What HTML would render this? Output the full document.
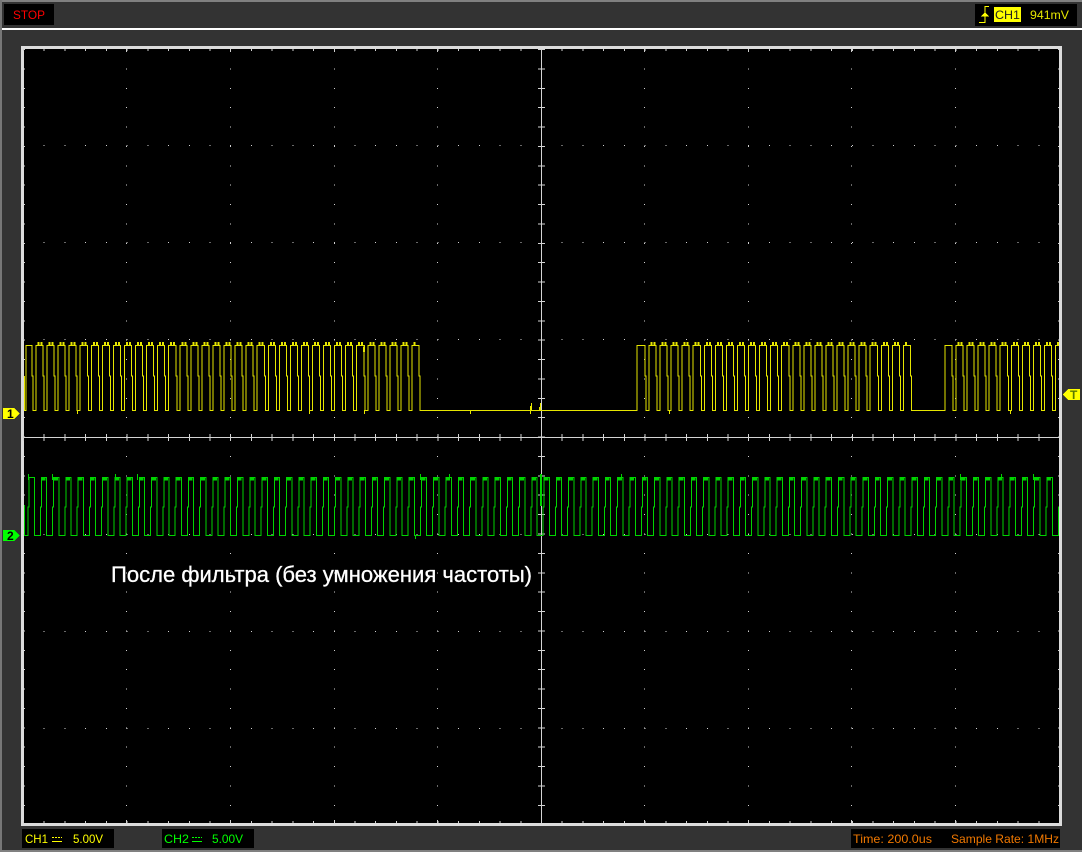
<!DOCTYPE html>
<html lang="ru">
<head>
<meta charset="utf-8">
<title>Oscilloscope</title>
<style>
html,body{margin:0;padding:0;background:#333;width:1082px;height:852px;overflow:hidden}
svg{display:block}
text{font-family:"Liberation Sans","DejaVu Sans",sans-serif;font-size:12px}
</style>
</head>
<body>
<svg xmlns="http://www.w3.org/2000/svg" width="1082" height="852" viewBox="0 0 1082 852">
<defs><clipPath id="scr"><rect x="24" y="49" width="1035" height="774"/></clipPath></defs>
<rect width="1082" height="852" fill="#333"/>
<g shape-rendering="crispEdges">
<rect x="0" y="0" width="1082" height="2" fill="#808080"/>
<rect x="0" y="0" width="2" height="852" fill="#777"/>
<rect x="0" y="850" width="1082" height="2" fill="#808080"/>
<rect x="2" y="28" width="1080" height="2" fill="#fff"/>
<rect x="4" y="4" width="50" height="21" fill="#000"/>
<rect x="975" y="4" width="102" height="22" fill="#000"/>
<rect x="994" y="7" width="27" height="15" fill="#ff0"/>
<rect x="21" y="46" width="1041" height="780" fill="#dcdcdc"/>
<rect x="24" y="49" width="1035" height="774" fill="#000"/>
<rect x="22" y="829" width="92" height="19" fill="#000"/>
<rect x="162" y="829" width="92" height="19" fill="#000"/>
<rect x="851" y="829" width="209" height="19" fill="#000"/>
</g>

<!-- grid dots -->
<g fill="none" stroke="#d0d0d0" stroke-width="1" shape-rendering="crispEdges">
<path stroke-dasharray="1 19.72" d="M23 145.5H1059M23 242.5H1059M23 339.5H1059M23 534.5H1059M23 631.5H1059M23 728.5H1059"/>
<path stroke-dasharray="1 18.38" d="M126.5 49V823M230.5 49V823M334.5 49V823M437.5 49V823M644.5 49V823M748.5 49V823M851.5 49V823M955.5 49V823M24.5 49V823M1058.5 49V823"/>
<path stroke-width="2" stroke-dasharray="1 19.72" d="M23 50H1059M23 822H1059"/>
<path d="M126.5 49V52M230.5 49V52M334.5 49V52M437.5 49V52M644.5 49V52M748.5 49V52M851.5 49V52M955.5 49V52M126.5 820V823M230.5 820V823M334.5 820V823M437.5 820V823M644.5 820V823M748.5 820V823M851.5 820V823M955.5 820V823"/>
<!-- centre cross -->
<path stroke="#d4d4d4" d="M24 437.5H1059M541.5 49V823"/>
<path stroke="#d4d4d4" stroke-width="7" stroke-dasharray="1 19.72" d="M23 437.5H1059"/>
<path stroke="#d4d4d4" stroke-width="7" stroke-dasharray="1 18.38" d="M541.5 49V823"/>
</g>

<g clip-path="url(#scr)" fill="none" shape-rendering="crispEdges">
<!-- CH1 -->
<path stroke="#e6e600" d="M24.5 376V410.5H26V345.5H32V376h1V410.5
h3V345.5h7.06V376h1V410.5h3V345.5h7.06V376h1V410.5h3V345.5h7.06V376h1V410.5h3V345.5h7.06V376h1V410.5h3V345.5h7.06V376h1V410.5
h3V345.5h7.06V376h1V410.5h3V345.5h7.06V376h1V410.5h3V345.5h7.06V376h1V410.5h3V345.5h7.06V376h1V410.5h3V345.5h7.06V376h1V410.5
h3V345.5h7.06V376h1V410.5h3V345.5h7.06V376h1V410.5h3V345.5h7.06V376h1V410.5h3V345.5h7.06V376h1V410.5h3V345.5h7.06V376h1V410.5
h3V345.5h7.06V376h1V410.5h3V345.5h7.06V376h1V410.5h3V345.5h7.06V376h1V410.5h3V345.5h7.06V376h1V410.5h3V345.5h7.06V376h1V410.5
h3V345.5h7.06V376h1V410.5h3V345.5h7.06V376h1V410.5h3V345.5h7.06V376h1V410.5h3V345.5h7.06V376h1V410.5h3V345.5h7.06V376h1V410.5
h3V345.5h7.06V376h1V410.5h3V345.5h7.06V376h1V410.5h3V345.5h7.06V376h1V410.5h3V345.5h7.06V376h1V410.5h3V345.5h7.06V376h1V410.5
h3V345.5h7.06V376h1V410.5h3V345.5h7.06V376h1V410.5h3V345.5h7.06V376h1V410.5h3V345.5h7.06V376h1V410.5h3V345.5h7.06V376h1V410.5
H637V345.5H645V376h1V410.5
h3V345.5h7.06V376h1V410.5h3V345.5h7.06V376h1V410.5h3V345.5h7.06V376h1V410.5h3V345.5h7.06V376h1V410.5h3V345.5h7.06V376h1V410.5
h3V345.5h7.06V376h1V410.5h3V345.5h7.06V376h1V410.5h3V345.5h7.06V376h1V410.5h3V345.5h7.06V376h1V410.5h3V345.5h7.06V376h1V410.5
h3V345.5h7.06V376h1V410.5h3V345.5h7.06V376h1V410.5h3V345.5h7.06V376h1V410.5h3V345.5h7.06V376h1V410.5h3V345.5h7.06V376h1V410.5
h3V345.5h7.06V376h1V410.5h3V345.5h7.06V376h1V410.5h3V345.5h7.06V376h1V410.5h3V345.5h7.06V376h1V410.5h3V345.5h7.06V376h1V410.5
h3V345.5h7.06V376h1V410.5h3V345.5h7.06V376h1V410.5h3V345.5h7.06V376h1V410.5h3V345.5h7.06V376h1V410.5
H945V345.5H952V376h1V410.5
h3V345.5h7.06V376h1V410.5h3V345.5h7.06V376h1V410.5h3V345.5h7.06V376h1V410.5h3V345.5h7.06V376h1V410.5h3V345.5h7.06V376h1V410.5
h3V345.5h7.06V376h1V410.5h3V345.5h7.06V376h1V410.5h3V345.5h7.06V376h1V410.5h3V345.5h7.06V376h1V410.5h3V345.5h7.06V376h1V410.5"/>
<path stroke="#e6e600" stroke-width="3" stroke-dasharray="2 1 2 6.06" d="M37.5 343.5H416M650.5 343.5H908M957.5 343.5H1059"/>
<path stroke="#e6e600" d="M77.5 410V414M309.5 410V414M364.5 410V414M470.5 410V414M531.5 403V411M530.5 406V414M540.5 403V411M539.5 407V411M669.5 410V414M1010.5 410V414M364.5 345V352M363.5 347V352"/>

<!-- CH2 -->
<path stroke="#00d400" d="M24.5 505V535.5H28V507h1V477.5H34.265V535.5
h6V507h1V477.5h5.265V535.5h6V507h1V477.5h5.265V535.5h6V507h1V477.5h5.265V535.5h6V507h1V477.5h5.265V535.5h6V507h1V477.5h5.265V535.5
h6V507h1V477.5h5.265V535.5h6V507h1V477.5h5.265V535.5h6V507h1V477.5h5.265V535.5h6V507h1V477.5h5.265V535.5h6V507h1V477.5h5.265V535.5
h6V507h1V477.5h5.265V535.5h6V507h1V477.5h5.265V535.5h6V507h1V477.5h5.265V535.5h6V507h1V477.5h5.265V535.5h6V507h1V477.5h5.265V535.5
h6V507h1V477.5h5.265V535.5h6V507h1V477.5h5.265V535.5h6V507h1V477.5h5.265V535.5h6V507h1V477.5h5.265V535.5h6V507h1V477.5h5.265V535.5
h6V507h1V477.5h5.265V535.5h6V507h1V477.5h5.265V535.5h6V507h1V477.5h5.265V535.5h6V507h1V477.5h5.265V535.5h6V507h1V477.5h5.265V535.5
h6V507h1V477.5h5.265V535.5h6V507h1V477.5h5.265V535.5h6V507h1V477.5h5.265V535.5h6V507h1V477.5h5.265V535.5h6V507h1V477.5h5.265V535.5
h6V507h1V477.5h5.265V535.5h6V507h1V477.5h5.265V535.5h6V507h1V477.5h5.265V535.5h6V507h1V477.5h5.265V535.5h6V507h1V477.5h5.265V535.5
h6V507h1V477.5h5.265V535.5h6V507h1V477.5h5.265V535.5h6V507h1V477.5h5.265V535.5h6V507h1V477.5h5.265V535.5h6V507h1V477.5h5.265V535.5
h6V507h1V477.5h5.265V535.5h6V507h1V477.5h5.265V535.5h6V507h1V477.5h5.265V535.5h6V507h1V477.5h5.265V535.5h6V507h1V477.5h5.265V535.5
h6V507h1V477.5h5.265V535.5h6V507h1V477.5h5.265V535.5h6V507h1V477.5h5.265V535.5h6V507h1V477.5h5.265V535.5h6V507h1V477.5h5.265V535.5
h6V507h1V477.5h5.265V535.5h6V507h1V477.5h5.265V535.5h6V507h1V477.5h5.265V535.5h6V507h1V477.5h5.265V535.5h6V507h1V477.5h5.265V535.5
h6V507h1V477.5h5.265V535.5h6V507h1V477.5h5.265V535.5h6V507h1V477.5h5.265V535.5h6V507h1V477.5h5.265V535.5h6V507h1V477.5h5.265V535.5
h6V507h1V477.5h5.265V535.5h6V507h1V477.5h5.265V535.5h6V507h1V477.5h5.265V535.5h6V507h1V477.5h5.265V535.5h6V507h1V477.5h5.265V535.5
h6V507h1V477.5h5.265V535.5h6V507h1V477.5h5.265V535.5h6V507h1V477.5h5.265V535.5h6V507h1V477.5h5.265V535.5h6V507h1V477.5h5.265V535.5
h6V507h1V477.5h5.265V535.5h6V507h1V477.5h5.265V535.5h6V507h1V477.5h5.265V535.5h6V507h1V477.5h5.265V535.5h6V507h1V477.5h5.265V535.5
h6V507h1V477.5h5.265V535.5h6V507h1V477.5h5.265V535.5h6V507h1V477.5h5.265V535.5h6V507h1V477.5h5.265V535.5h6V507h1V477.5h5.265V535.5
h6V507h1V477.5h5.265V535.5h6V507h1V477.5h5.265V535.5h6V507h1V477.5h5.265V535.5h6V507h1V477.5h5.265V535.5h6V507h1V477.5h5.265V535.5"/>
<path stroke="#00d400" stroke-width="3" stroke-dasharray="4 8.265" d="M41.5 479H1059"/>
<path stroke="#00d400" d="M28.5 474V480M52.5 474V480M115.5 474V480M137.5 474V480M420.5 474V480M449.5 474V480M541.5 474V506M540.5 474V506M621.5 474V480M960.5 474V480M1001.5 474V480M1033.5 474V480M415.5 535V539"/>
</g>

<!-- Channel flags -->
<path d="M3 408H14L20 413.5L14 419H3Z" fill="#ff0" shape-rendering="crispEdges"/>
<text x="7" y="418" fill="#000" font-weight="bold">1</text>
<path d="M3 530H14L20 535.5L14 541H3Z" fill="#0f0" shape-rendering="crispEdges"/>
<text x="7" y="540" fill="#000" font-weight="bold">2</text>
<path d="M1080 389H1068L1063 394.5L1068 400H1080Z" fill="#ff0" shape-rendering="crispEdges"/>
<text x="1070" y="399" fill="#5a7a00" font-weight="bold">T</text>

<!-- Header -->
<text x="13" y="19" fill="#f00" textLength="32" lengthAdjust="spacingAndGlyphs">STOP</text>
<path d="M979 22.5H985V6.5H989" fill="none" stroke="#ff0" shape-rendering="crispEdges"/>
<path d="M981 16.5L985 12L989 16.5Z" fill="#ff0" shape-rendering="crispEdges"/>
<text x="995" y="19" fill="#222" textLength="25" lengthAdjust="spacingAndGlyphs">CH1</text>
<text x="1030" y="19" fill="#e6e600" textLength="39" lengthAdjust="spacingAndGlyphs">941mV</text>

<!-- Annotation -->
<text x="111" y="582" fill="#fff" stroke="#fff" stroke-width=".3" style="font-size:22px" textLength="421" lengthAdjust="spacingAndGlyphs">После фильтра (без умножения частоты)</text>

<!-- Footer -->
<text x="25" y="843" fill="#ff0" textLength="23" lengthAdjust="spacingAndGlyphs">CH1</text>
<path d="M52 837.5H62" stroke="#ff0" stroke-dasharray="2 1" shape-rendering="crispEdges"/>
<path d="M52 841.5H62" stroke="#ff0" shape-rendering="crispEdges"/>
<text x="73" y="843" fill="#ff0" textLength="30" lengthAdjust="spacingAndGlyphs">5.00V</text>
<text x="164" y="843" fill="#0f0" textLength="25" lengthAdjust="spacingAndGlyphs">CH2</text>
<path d="M192 837.5H202" stroke="#0f0" stroke-dasharray="2 1" shape-rendering="crispEdges"/>
<path d="M192 841.5H202" stroke="#0f0" shape-rendering="crispEdges"/>
<text x="212" y="843" fill="#0f0" textLength="31" lengthAdjust="spacingAndGlyphs">5.00V</text>
<text x="853" y="843" fill="#f07800" textLength="79" lengthAdjust="spacingAndGlyphs">Time: 200.0us</text>
<text x="951" y="843" fill="#f07800" textLength="108" lengthAdjust="spacingAndGlyphs">Sample Rate: 1MHz</text>
</svg>
</body>
</html>
